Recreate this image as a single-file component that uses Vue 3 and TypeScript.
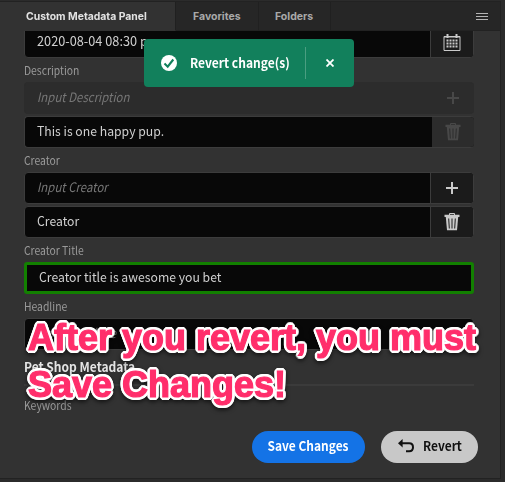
<script setup lang="ts">
interface Row {
  label?: string
  text: string
  placeholder?: boolean
  action?: 'calendar' | 'plus' | 'trash'
  disabled?: boolean
  actionDisabled?: boolean
  modified?: boolean
}

interface Tab {
  name: string
  cls: string
}

const tabs: Tab[] = [
  { name: 'Custom Metadata Panel', cls: 'active' },
  { name: 'Favorites', cls: 'favorites' },
  { name: 'Folders', cls: 'folders' },
]

const rows: Row[] = [
  { text: '2020-08-04 08:30 pm', action: 'calendar' },
  { label: 'Description', text: 'Input Description', placeholder: true, action: 'plus', disabled: true, actionDisabled: true },
  { text: 'This is one happy pup.', action: 'trash', actionDisabled: true },
  { label: 'Creator', text: 'Input Creator', placeholder: true, action: 'plus' },
  { text: 'Creator', action: 'trash' },
  { label: 'Creator Title', text: 'Creator title is awesome you bet', modified: true },
  { label: 'Headline', text: 'Input Headline', placeholder: true },
]
</script>

<template>
  <div class="window">
    <div class="panel">
      <nav class="tabs">
        <div v-for="tab in tabs" :key="tab.name" class="tab" :class="tab.cls"><span>{{ tab.name }}</span></div>
        <div class="tab-rest">
          <svg width="12" height="8" viewBox="0 0 12 8"><path d="M0 .5H12M0 3.5H12M0 6.5H12" stroke="#b4b4b4" /></svg>
        </div>
      </nav>

      <main class="content">
        <div class="form">
          <template v-for="row in rows" :key="row.text">
            <div v-if="row.label" class="label"><span>{{ row.label }}</span></div>
            <div class="field" :class="{ disabled: row.disabled, modified: row.modified, 'action-off': row.actionDisabled, labelled: row.label }">
              <div class="input" :class="{ placeholder: row.placeholder }"><span>{{ row.text }}</span></div>
              <div v-if="row.action" class="action">
                <svg v-if="row.action === 'calendar'" width="18" height="17" viewBox="0 0 18 17">
                  <path d="M1 2.500H17V16.500H1Z" fill="none" stroke="currentColor" />
                  <path d="M3.500 0h2v4h-2zM12.500 0h2v4h-2zM1 2h16v1.400H1z" fill="currentColor" />
                  <path d="M3.500 6.500H15M3.500 9.500H15M3.500 12.500H15" stroke="currentColor" stroke-width="2" stroke-dasharray="2 1" />
                </svg>
                <svg v-else-if="row.action === 'plus'" width="12" height="12" viewBox="0 0 12 12">
                  <path d="M6 0V12M0 6H12" stroke="currentColor" stroke-width="2" />
                </svg>
                <svg v-else width="16" height="18" viewBox="0 0 16 18">
                  <path d="M5.500 2V.5H10.500V2" fill="none" stroke="currentColor" />
                  <path d="M.5 1.800H15.500V4H.5Z" fill="currentColor" />
                  <path d="M1.800 4H14.200L13 17.300H3Z" fill="currentColor" />
                  <path d="M4.700 5.500L5.300 15.500M8 5.500V15.500M11.300 5.500L10.700 15.500" class="slots" />
                </svg>
              </div>
            </div>
          </template>
          <h2><span>Pet Shop Metadata</span></h2>
          <hr>
          <div class="label keywords"><span>Keywords</span></div>
        </div>
      </main>

      <footer class="buttons">
        <button class="save"><span>Save Changes</span></button>
        <button class="revert">
          <svg width="16" height="14" viewBox="0 0 16 14">
            <path d="M0 4.200L4.600 0V8.400Z" fill="#111" />
            <path d="M4 4.200H11.200Q15 4.200 15 8.200T11.200 12.200H8" fill="none" stroke="#111" stroke-width="2" />
          </svg>
          <span>Revert</span>
        </button>
      </footer>
    </div>

    <div class="toast">
      <svg class="check" width="16" height="16" viewBox="0 0 16 16">
        <circle cx="8" cy="8" r="8" fill="#fff" />
        <path d="M3.500 8.500L6.700 11.700L12.300 4.500" fill="none" stroke="#12805c" stroke-width="2.100" />
      </svg>
      <span class="message">Revert change(s)</span>
      <i class="separator"></i>
      <svg class="close" width="8" height="8" viewBox="0 0 8 8"><path d="M.5.500L7.500 7.500M7.500.5L.5 7.500" stroke="#fff" stroke-width="1.800" /></svg>
    </div>

    <div class="callout"><div>After you revert, you must</div><div>Save Changes!</div></div>
  </div>
</template>

<style>
html, body { margin: 0; background: #2b2b2b; overflow: hidden; }
</style>

<style scoped>
* { box-sizing: border-box; }
.window {
  position: relative;
  width: 505px;
  height: 482px;
  overflow: hidden;
  background: #2b2b2b;
  color: #d0d0d0;
  font-family: "Noto Sans CJK SC", "Noto Sans", sans-serif;
}
svg { display: block; flex: none; }
span { display: inline-block; white-space: nowrap; transform-origin: left center; }
.panel {
  display: flex;
  flex-direction: column;
  width: 501px;
  height: 478px;
  border: 1px solid #222;
  border-width: 1px 1px 1px 0;
  margin-top: 1px;
  background: #323232;
}
.tabs { display: flex; height: 29px; flex: none; }
.tab, .tab-rest {
  display: flex;
  align-items: center;
  background: #262626;
  border-bottom: 1px solid #222;
}
.tab {
  border-right: 1px solid #202020;
  font: 700 10.500px/28px Inter, "Liberation Sans", sans-serif;
  color: #a9a9a9;
  padding: 1px 0 0 17px;
}
.active { width: 176px; background: #323232; border-bottom-color: #323232; color: #e2e2e2; padding-left: 26px; }
.active span { transform: scaleX(0.99); }
.favorites { width: 83px; }
.folders { width: 72px; padding-left: 16px; }
.tab-rest { flex: 1; justify-content: flex-end; padding: 2px 12px 0 0; }

.content { flex: 1; min-height: 0; overflow: hidden; padding: 0 26px 0 24px; }
.form { margin-top: -5px; display: flex; flex-direction: column; }
.label { height: 24px; display: flex; align-items: center; font-size: 11.500px; line-height: 20px; color: #9a9a9a; }
.label span { transform: scaleX(0.9); }
.field {
  display: flex;
  height: 32px;
  border: 1px solid #3c3c3c;
  border-radius: 4px;
  overflow: hidden;
  background: #080808;
}
.field:not(.labelled) { margin-top: 2px; }
.field:first-child { margin-top: 0; }
.input { flex: 1; display: flex; align-items: center; padding: 0 0 3px 12px; font-size: 13px; line-height: 20px; }
.input span { transform: scaleX(0.94); }
.field:first-child .input span { transform: scaleX(0.98); }
.input.placeholder { color: #777; font-style: italic; }
.input.placeholder span { transform: scaleX(0.88); }
.action {
  width: 43px;
  display: flex;
  align-items: center;
  justify-content: center;
  background: #1b1b1b;
  border-left: 1px solid #3c3c3c;
  color: #cacaca;
}
.slots { stroke: #1b1b1b; stroke-width: 1; fill: none; }
.action-off { border-right-width: 0; }
.action-off .action { width: 42px; border-left: 0; background: #2c2c2c; color: #484848; }
.action-off .slots { stroke: #2c2c2c; }
.disabled { border-color: #2c2c2c; background: #2c2c2c; }
.modified { border: 3px solid #128000; border-radius: 3px; }
h2 { height: 34px; margin: 0; display: flex; align-items: center; font-size: 13px; line-height: 20px; color: #e4e4e4; }
h2 span { transform: scaleX(0.925); }
hr { width: 100%; height: 2px; margin: 0; border: 0; background: #3b3b3b; }
.keywords { margin-top: 7px; }

.buttons { display: flex; gap: 16px; justify-content: flex-end; padding: 0 22px 15px 0; }
button {
  height: 32px;
  padding: 0 0 3px;
  border: 0;
  border-radius: 16px;
  display: flex;
  align-items: center;
  justify-content: center;
  font: 700 13px/20px "Noto Sans CJK SC", "Noto Sans", sans-serif;
}
.save { width: 113px; background: #1473e6; color: #fff; }
.save span { transform: scaleX(0.92); transform-origin: center; }
.revert { width: 97px; background: #c8c8c8; color: #111; gap: 9px; justify-content: flex-start; padding-left: 17px; }
.revert span { transform: scaleX(0.92); }

.toast {
  position: absolute;
  left: 144px;
  top: 39px;
  width: 210px;
  height: 48px;
  border-radius: 4px;
  display: flex;
  align-items: center;
  padding-left: 17px;
  background: #12805c;
  color: #fff;
  font-size: 13px;
  font-weight: 700;
}
.message { margin-left: 13px; width: 115px; padding-bottom: 2px; transform: scaleX(0.925); }
.separator { width: 1px; height: 32px; background: #4a9e81; }
.close { margin-left: 20px; }

.callout {
  position: absolute;
  left: 28px;
  top: 314px;
  color: #ff2e6b;
  font: 700 36px/47px "Liberation Sans", Arial, sans-serif;
  white-space: nowrap;
  -webkit-text-stroke: 1.200px #ff2e6b;
  text-shadow:
    3px 0 #fff, 2.800px 1.100px #fff, 2.100px 2.100px #fff, 1.100px 2.800px #fff,
    0 3px #fff, -1.100px 2.800px #fff, -2.100px 2.100px #fff, -2.800px 1.100px #fff,
    -3px 0 #fff, -2.800px -1.100px #fff, -2.100px -2.100px #fff, -1.100px -2.800px #fff,
    0 -3px #fff, 1.100px -2.800px #fff, 2.100px -2.100px #fff, 2.800px -1.100px #fff;
  filter: drop-shadow(0 2px 2px rgb(0 0 0 / 60%));
}
</style>
